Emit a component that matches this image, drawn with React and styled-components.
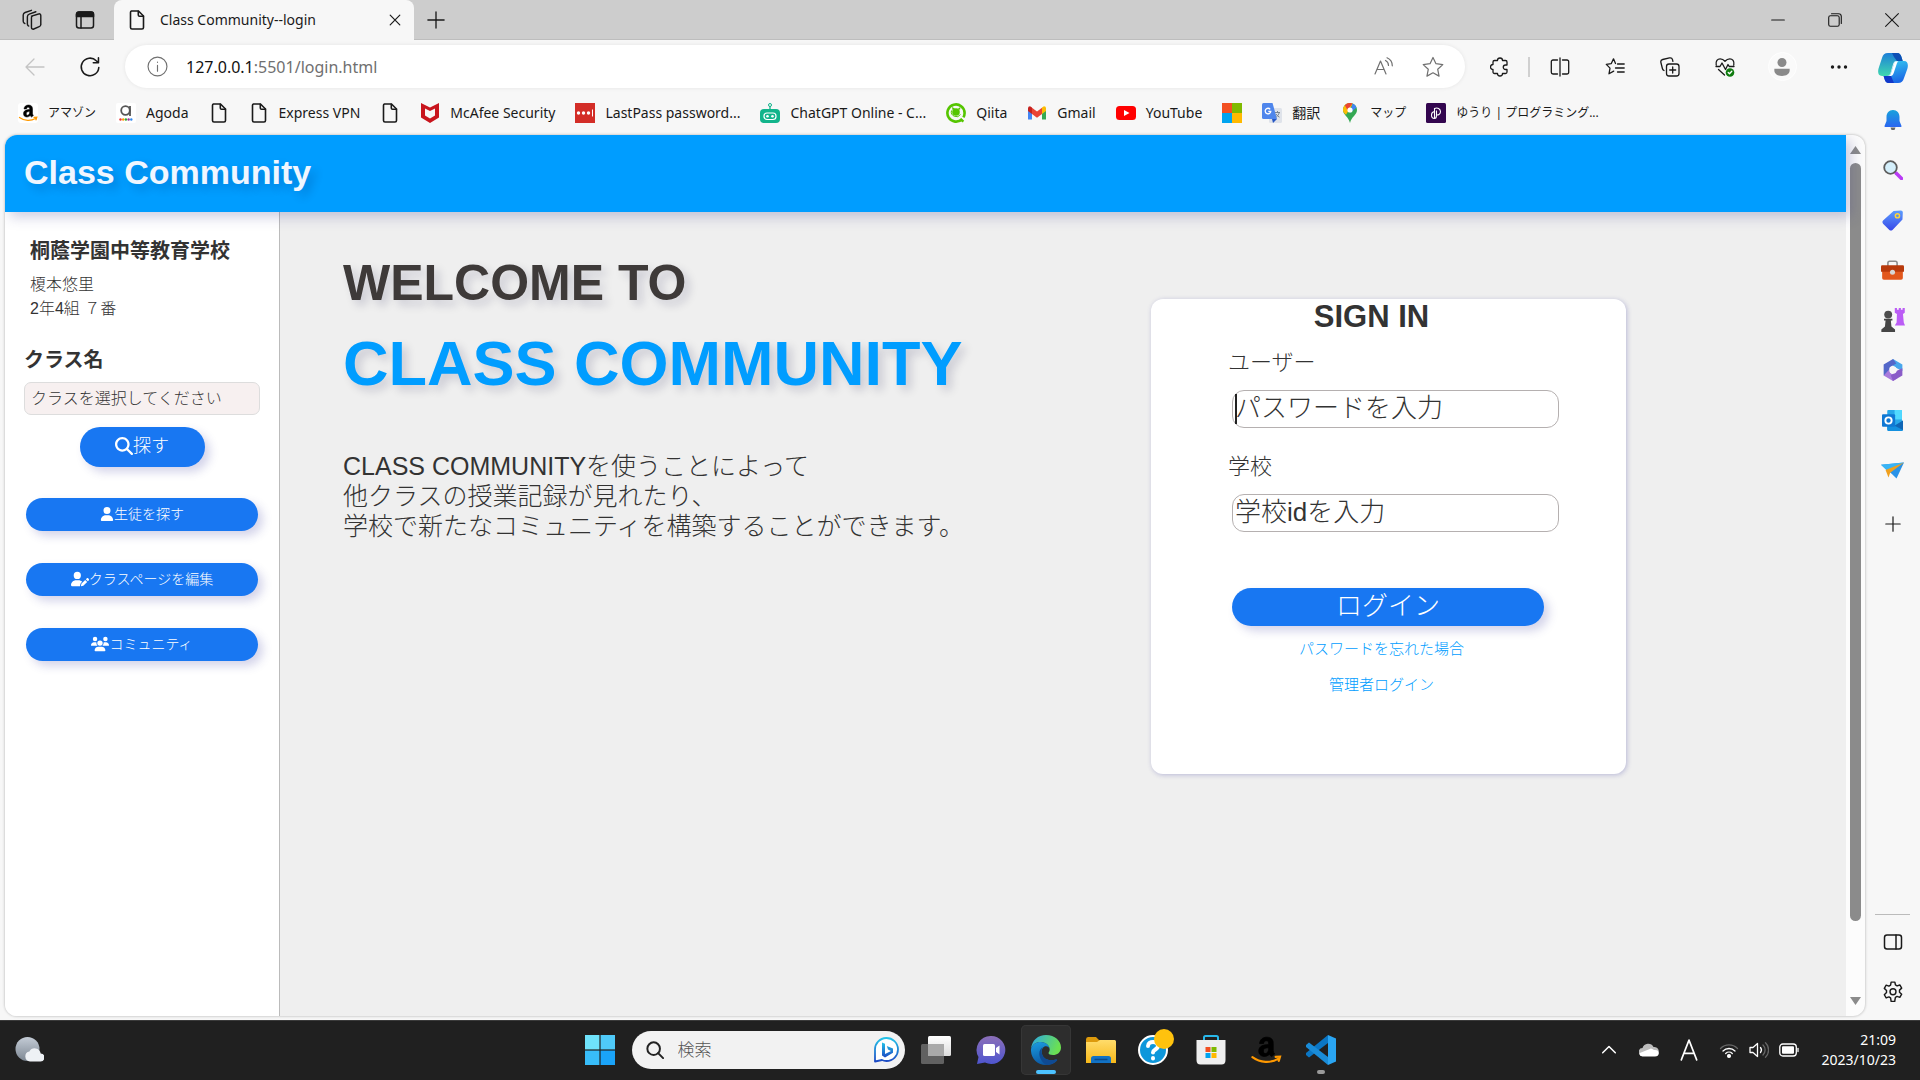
import React from "react";
import styled, { createGlobalStyle } from "styled-components";
import { FaMagnifyingGlass, FaUser, FaUserPen, FaUsers } from "react-icons/fa6";

const uiFont = `"Noto Sans", "Noto Sans CJK JP", sans-serif`;
const pageFont = `"Liberation Sans", Arial, "Noto Sans CJK JP", sans-serif`;
const sky = "#009dff";
const blue = "#1877f2";
const softShadow = "5px 5px 10px rgba(60, 60, 160, 0.22)";

const GlobalStyle = createGlobalStyle`
  *, *::before, *::after { box-sizing: border-box; }
  body { margin: 0; background: #f7f7f7; font-family: ${uiFont}; }
  button, input, select { font-family: inherit; font-weight: inherit; }
  h1, h2, p { margin: 0; }
  svg { display: block; flex: none; }
`;

/* ---------- Browser frame ---------- */

const Desktop = styled.div`
  min-height: 100vh;
  display: flex;
  flex-direction: column;
`;

const TabStrip = styled.header`
  height: 40px;
  display: flex;
  align-items: stretch;
  background: #cdcdcd;
  box-shadow: inset 0 -1px 0 #bdbdbd;
`;

const StripTools = styled.div`
  width: 114px;
  display: flex;
  align-items: center;
  gap: 32px;
  padding-left: 21px;
`;

const PlainButton = styled.button`
  display: grid;
  place-items: center;
  padding: 0;
  border: 0;
  background: none;
  color: #1a1a1a;
`;

const Tab = styled.div`
  width: 300px;
  display: flex;
  align-items: center;
  gap: 13px;
  padding: 0 13px;
  border-radius: 8px 8px 0 0;
  background: #f7f7f7;
  font-size: 14px;
  line-height: 20px;
  color: #1a1a1a;
  span { flex: 1; }
`;

const NewTab = styled(PlainButton)`
  width: 44px;
`;

const WindowButtons = styled.div`
  display: flex;
  margin-left: auto;
`;

const WindowButton = styled(PlainButton)`
  width: 57px;
`;

const Shell = styled.div`
  flex: 1;
  display: flex;
`;

const BrowserColumn = styled.div`
  flex: 1;
  min-width: 0;
  display: flex;
  flex-direction: column;
`;

const Toolbar = styled.nav`
  height: 53px;
  display: flex;
  align-items: center;
  padding-left: 7px;
`;

const ToolButton = styled(PlainButton)`
  width: ${(p) => p.$w || 55}px;
  height: 40px;
  color: ${(p) => (p.$faded ? "#c4c4c4" : "#1a1a1a")};
`;

const AddressBar = styled.div`
  flex: 1;
  height: 43px;
  display: flex;
  align-items: center;
  margin: 0 7px 0 8px;
  padding: 0 8px 0 22px;
  border-radius: 22px;
  background: #fff;
  box-shadow: 0 0 4px rgba(0, 0, 0, 0.08);
  color: #707070;
`;

const Url = styled.div`
  flex: 1;
  margin-left: 18px;
  font-size: 16px;
  line-height: 22px;
  b { font-weight: 400; color: #111; }
`;

const AddressButton = styled(PlainButton)`
  width: 49px;
  color: #707070;
`;

const Divider = styled.span`
  width: 2px;
  height: 20px;
  margin: 0 2px 0 1px;
  background: #d0d0d0;
`;

const Avatar = styled.span`
  width: 29px;
  height: 29px;
  display: grid;
  place-items: center;
  border-radius: 50%;
  background: #fafafa;
  border: 1px solid #fff;
`;

const Favorites = styled.nav`
  height: 42px;
  display: flex;
  align-items: center;
  gap: 20px;
  padding: 0 18px 2px;
`;

const Favorite = styled.a`
  display: flex;
  align-items: center;
  gap: 10px;
  color: #1a1a1a;
  font-size: ${(p) => (p.$kana ? 12 : 14)}px;
  line-height: 20px;
  text-decoration: none;
  white-space: nowrap;
`;

const EdgeSidebar = styled.aside`
  width: 55px;
  display: flex;
  flex-direction: column;
  align-items: center;
  padding-bottom: 3px;
`;

const SideButton = styled(PlainButton)`
  width: 40px;
  height: 50px;
`;

const CopilotButton = styled(SideButton)`
  height: 55px;
`;

const AddButton = styled(SideButton)`
  height: 58px;
`;

const SideRule = styled.hr`
  width: 35px;
  margin: auto 0 2px;
  border: 0;
  border-top: 1px solid #bbb;
`;

const Viewport = styled.div`
  flex: 1;
  display: flex;
  margin: 0 0 4px 5px;
  border-radius: 12px;
  overflow: hidden;
  background: #fcfcfc;
  box-shadow: 0 0 3px rgba(0, 0, 0, 0.3);
`;

const ScrollTrack = styled.div`
  width: 19px;
  display: flex;
  flex-direction: column;
  align-items: center;
  padding: 10px 0;
`;

const ScrollThumb = styled.div`
  width: 11px;
  flex: 1;
  margin: 9px 0 76px;
  border-radius: 6px;
  background: #8b8b8b;
`;

/* ---------- Web page ---------- */

const Page = styled.div`
  flex: 1;
  display: flex;
  flex-direction: column;
  background: #efefef;
  font-family: ${pageFont};
  font-weight: 300;
  color: #333;
`;

const PageHeader = styled.header`
  position: relative;
  z-index: 1;
  height: 77px;
  padding-left: 19px;
  background: ${sky};
  box-shadow: 5px 5px 12px rgba(60, 60, 140, 0.25);
`;

const Brand = styled.h1`
  font-size: 34px;
  line-height: 74px;
  color: #f0f6ff;
  text-shadow: 5px 5px 10px rgba(0, 0, 60, 0.2);
`;

const PageBody = styled.div`
  flex: 1;
  display: flex;
`;

const ClassPanel = styled.aside`
  width: 275px;
  padding: 25px 19px;
  border-right: 1px solid #bbb;
  background: #fff;
`;

const Profile = styled.div`
  padding-left: 6px;
  font-size: 16px;
  line-height: 24px;
`;

const School = styled.h2`
  margin-bottom: 8px;
  font-size: 20px;
  line-height: 28px;
`;

const ClassLabel = styled.label`
  display: block;
  margin: 25px 0 8px;
  font-size: 20px;
  font-weight: 700;
  line-height: 28px;
`;

const ClassSelect = styled.select`
  appearance: none;
  display: block;
  width: 100%;
  height: 33px;
  padding: 0 6px;
  border: 1px solid #ddd;
  border-radius: 7px;
  background: #f7f0f0;
  color: #333;
  font-size: 16px;
`;

const Pill = styled.button`
  display: flex;
  align-items: center;
  justify-content: center;
  width: 100%;
  height: 33px;
  padding: 0 0 2px;
  border: 0;
  border-radius: 20px;
  background: ${blue};
  box-shadow: ${softShadow};
  color: #fff;
  font-size: 14px;
  line-height: 20px;
`;

const SearchPill = styled(Pill)`
  width: 125px;
  height: 40px;
  margin: 12px auto 31px;
  padding-bottom: 3px;
  font-size: 18px;
  line-height: 24px;
`;

const PillList = styled.div`
  display: flex;
  flex-direction: column;
  gap: 32px;
  padding: 0 2px;
`;

const Main = styled.main`
  flex: 1;
  display: flex;
  align-items: flex-start;
  justify-content: space-between;
  padding: 0 220px 0 63px;
`;

const Hero = styled.section`
  padding-top: 41px;
`;

const Welcome = styled.p`
  font-size: 50px;
  font-weight: 700;
  line-height: 60px;
  color: #3e3a39;
  text-shadow: 5px 5px 10px rgba(0, 0, 60, 0.16);
`;

const HeroName = styled.h2`
  margin: 12px 0 50px;
  font-size: 63px;
  line-height: 76px;
  color: ${sky};
  text-shadow: 5px 5px 10px rgba(0, 0, 60, 0.16);
`;

const Lead = styled.p`
  font-size: 25px;
  line-height: 30px;
`;

const Card = styled.form`
  width: 475px;
  height: 475px;
  margin-top: 87px;
  padding: 0 67px 0 77px;
  border-radius: 12px;
  background: #fff;
  box-shadow: 1px 1px 5px rgba(60, 60, 160, 0.3);
`;

const CardTitle = styled.h2`
  padding-right: 44px;
  margin-bottom: 13px;
  font-size: 31px;
  line-height: 36px;
  text-align: center;
`;

const Field = styled.div`
  position: relative;
  margin-bottom: 24px;
  padding-left: 4px;
`;

const FieldLabel = styled.label`
  display: block;
  margin: 0 0 12px -4px;
  font-size: 22px;
  line-height: 30px;
`;

const TextInput = styled.input`
  display: block;
  width: 100%;
  height: 38px;
  padding: 0 2px 2px;
  border: 1px solid #b5b0b0;
  border-radius: 12px;
  background: #fff;
  color: #333;
  font-size: 26px;
  outline: 0;
  &::placeholder { color: #333; opacity: 1; }
`;

const Caret = styled.span`
  position: absolute;
  left: 7px;
  bottom: 4px;
  width: 2px;
  height: 30px;
  background: #222;
`;

const LoginPill = styled(Pill)`
  width: 312px;
  height: 38px;
  margin: 56px 0 11px 4px;
  padding-bottom: 3px;
  font-size: 26px;
  line-height: 32px;
`;

const CardLinks = styled.div`
  display: flex;
  flex-direction: column;
  align-items: center;
  gap: 12px;
  padding-right: 24px;
`;

const CardLink = styled.a`
  color: ${sky};
  font-size: 15px;
  line-height: 24px;
  text-decoration: none;
`;

/* ---------- Taskbar ---------- */

const Taskbar = styled.footer`
  height: 60px;
  display: grid;
  grid-template-columns: 1fr auto 1fr;
  align-items: center;
  background: #202020;
  box-shadow: inset 0 1px 0 #3a3a3a;
  color: #fff;
`;

const TaskButton = styled(PlainButton)`
  position: relative;
  width: 50px;
  height: 50px;
  border-radius: 5px;
  background: ${(p) => (p.$active ? "#2d2d2d" : "none")};
  box-shadow: ${(p) => (p.$active ? "inset 0 0 0 1px #363636" : "none")};
  &::after {
    content: "";
    position: absolute;
    bottom: 1px;
    width: ${(p) => (p.$active ? 20 : 8)}px;
    height: 4px;
    border-radius: 2px;
    background: ${(p) => (p.$active ? "#4cc2ff" : "#9a9a9a")};
    display: ${(p) => (p.$active || p.$running ? "block" : "none")};
  }
`;

const WeatherButton = styled(TaskButton)`
  margin-left: 4px;
`;

const Apps = styled.div`
  display: flex;
  align-items: center;
  gap: 5px;
`;

const SearchBox = styled.label`
  width: 273px;
  height: 38px;
  display: flex;
  align-items: center;
  gap: 14px;
  margin: 0 1px 0 2px;
  padding: 0 6px 0 14px;
  border-radius: 19px;
  background: #f2f2f2;
`;

const SearchInput = styled.input`
  flex: 1;
  min-width: 0;
  padding: 0;
  border: 0;
  background: none;
  outline: 0;
  font-size: 17px;
  font-weight: 300;
  line-height: 24px;
  &::placeholder { color: #555; opacity: 1; }
`;

const Tray = styled.div`
  display: flex;
  align-items: center;
  justify-content: flex-end;
  padding-right: 24px;
`;

const TrayItem = styled(PlainButton)`
  width: 40px;
  height: 40px;
  color: #fff;
`;

const TrayStatus = styled(PlainButton)`
  display: flex;
  align-items: center;
  margin-left: 5px;
  color: #fff;
  svg { margin: 0 5px; }
`;

const Clock = styled.time`
  width: 92px;
  font-size: 14px;
  line-height: 20px;
  text-align: right;
`;

/* ---------- Drawings ---------- */

const Line = ({ size = 20, w = 1.3, children }) => (
  <svg width={size} height={size} viewBox="0 0 20 20" fill="none" stroke="currentColor" strokeWidth={w} strokeLinecap="round" strokeLinejoin="round" aria-hidden="true">
    {children}
  </svg>
);

const Art = ({ size = 20, box = 20, children }) => (
  <svg width={size} height={size} viewBox={`0 0 ${box} ${box}`} aria-hidden="true">{children}</svg>
);

const Grad = ({ id, a, b, x2 = 0, y2 = 1 }) => (
  <linearGradient id={id} x1="0" y1="0" x2={x2} y2={y2}>
    <stop offset="0" stopColor={a} />
    <stop offset="1" stopColor={b} />
  </linearGradient>
);

const PageIcon = () => (
  <Line w={1.6}>
    <path d="M4.500 1h7l5 5v11.500a1.500 1.500 0 0 1-1.500 1.500h-10a1.500 1.500 0 0 1-1.500-1.500v-15A1.500 1.500 0 0 1 4.500 1z" />
    <path d="M11.300 1.200v3.800a1.300 1.300 0 0 0 1.300 1.300h3.800" />
  </Line>
);

const Workspaces = () => (
  <Line size={22}>
    <path d="M9.500 6.500l6.500-2a1.500 1.500 0 0 1 2 1.500v8a2 2 0 0 1-1.400 2l-5 2.200a1.500 1.500 0 0 1-2.100-1.400V8a1.500 1.500 0 0 1 1-1.500" />
    <path d="M7 15.500l-.5-.4a2 2 0 0 1-.7-1.500V7a2.500 2.500 0 0 1 1.700-2.300l6-2.200" />
    <path d="M3.500 13.200l-.8-.6A2 2 0 0 1 2 11V5.500a2.500 2.500 0 0 1 1.700-2.300L9.500 1.200" />
  </Line>
);

const VerticalTabs = () => (
  <Line w={1.5}>
    <rect x="1.500" y="2" width="17" height="16" rx="2.500" />
    <path d="M1.500 6.500V4.500A2.500 2.500 0 0 1 4 2h12a2.500 2.500 0 0 1 2.500 2.500v2z" fill="currentColor" />
    <path d="M6 6.500V18" />
  </Line>
);

const Plus = ({ size = 18 }) => <Line size={size} w={1.5}><path d="M10 1v18M1 10h18" /></Line>;
const Cross = ({ size = 12, w = 2 }) => <Line size={size} w={w}><path d="M2 2l16 16M18 2L2 18" /></Line>;
const Back = () => <Line><path d="M19 10H1M9 2L1 10l8 8" /></Line>;
const Reload = () => <Line size={22} w={1.4}><path d="M18 10.500a8 8 0 1 1-2.300-6.200l1.800 1.700M17.700 1.500v4.700H13" /></Line>;
const Info = () => <Line size={21} w={1.1}><circle cx="10" cy="10" r="9" /><path d="M10 9v5.500M10 5.800v.2" /></Line>;

const ReadAloud = () => (
  <Line w={1.2}><path d="M1 17L6.500 4 12 17M3 12.500h7M11.500 3.500c2 1 3 2.800 3 5M13 .8c3.500 1.500 5.300 4.500 5.300 8" /></Line>
);

const starPath = "M10 1.300l2.700 5.700 6.200.8-4.600 4.300 1.200 6.200-5.500-3-5.500 3 1.200-6.200L1.100 7.800 7.300 7z";
const Star = () => <Line size={22} w={1.1}><path d={starPath} /></Line>;

const Puzzle = () => (
  <Line><path d="M4.500 3.500h3a2.500 2.500 0 0 1 5 0h3a1.500 1.500 0 0 1 1.500 1.500v3h-1.500a2.200 2.200 0 0 0 0 4.500H17V15a1.500 1.500 0 0 1-1.500 1.500h-3a2.500 2.500 0 0 1-5 0h-3A1.500 1.500 0 0 1 3 15v-2.500a2.500 2.500 0 0 1 0-5V5a1.500 1.500 0 0 1 1.500-1.500z" /></Line>
);

const SplitScreen = () => (
  <Line><path d="M7.500 3H3a1.700 1.700 0 0 0-1.700 1.700v10.600A1.700 1.700 0 0 0 3 17h4.500M12.500 3H17a1.700 1.700 0 0 1 1.700 1.700v10.600A1.700 1.700 0 0 1 17 17h-4.500M10 1v18" /></Line>
);

const FavList = () => (
  <Line><path d="M10.500 6.500L8.500 1.800 6.300 6.600l-5 .8 3.700 3.700-1 5.700 4.700-2.700M12.500 7h6.700M10.500 11h8.700M12.500 15h6.700" /></Line>
);

const Collections = () => (
  <Line>
    <rect x="6.500" y="7" width="12.500" height="12" rx="2.500" />
    <path d="M12.700 10v6M9.700 13h6M4 13.500a3 3 0 0 1-1.600-2L.9 5.500a2.500 2.500 0 0 1 1.800-3L9.500.9a2.500 2.500 0 0 1 3 1.800l.4 1.600" />
  </Line>
);

const Health = () => (
  <Line>
    <path d="M1.200 8C.5 4 2.500 1.800 5.200 1.800c2 0 3.500 1 4.800 2.500 1.300-1.500 2.800-2.500 4.800-2.500 2.700 0 4.700 2.200 4 6.200M1 9.500h4L7 6l3.500 6.500 2.500-5 1.200 2H19M3.500 12.500L9.500 18" />
    <circle cx="15" cy="15.500" r="4.300" fill="#107c10" stroke="none" />
    <path d="M13.200 15.500l1.300 1.300 2.300-2.500" stroke="#fff" />
  </Line>
);

const Person = () => <Art size={18}><circle cx="10" cy="5" r="5" fill="#8a8a8a" /><path d="M1.500 12h17v2c0 4-4 6-8.500 6s-8.500-2-8.500-6z" fill="#8a8a8a" /></Art>;
const Dots = () => <Art><g fill="#1a1a1a"><circle cx="3.500" cy="10" r="1.700" /><circle cx="10" cy="10" r="1.700" /><circle cx="16.500" cy="10" r="1.700" /></g></Art>;

const Copilot = () => (
  <Art size={30} box={30}>
    <defs>
      <Grad id="cpA" a="#1d7fd8" b="#3fd8b0" />
      <Grad id="cpB" a="#35cdf0" b="#1c6ae6" x2={0.3} />
    </defs>
    <path d="M10 0h9c3 0 4 2 4.800 5l.9 3H19c-2.500 0-3.300 1-4 3.500L12.500 20c-.7 2-1.500 3-3.500 3H4c-4 0-4.500-4-3.300-8L4 5c1-3.300 2.500-5 6-5z" fill="url(#cpA)" />
    <path d="M14 0h5c3 0 4 2 4.800 5l.9 3H19l-3-4z" fill="#0d4fb5" />
    <path d="M20 30h-9c-3 0-4-2-4.800-5l-.6-2H9c2.500 0 3.300-1 4-3.500L16 11c.7-2 1.500-3 3.500-3H26c4 0 4.500 4 3.300 8L26 25c-1 3.300-2.500 5-6 5z" fill="url(#cpB)" />
    <path d="M16 30h-5c-3 0-4-2-4.800-5l-.6-2H9l4 0z" fill="#1238c9" />
    <path d="M18.500 8.200c-1.500.3-2 1.200-2.600 3L13 20c-.6 1.800-1.300 2.800-3 3h2.500c1.700 0 2.500-1 3.200-3l3-9c.4-1.300.7-2 1.800-2.800z" fill="#fff" />
  </Art>
);

const Bell = () => (
  <Art><defs><Grad id="bell" a="#18a2dd" b="#2b66f0" /></defs><path d="M7.500 17.500h5L11.500 20h-3z" fill="#666" /><path d="M10 0c4 0 6.500 3 6.500 7v4l2 5q.3 1-.8 1H2.300q-1.100 0-.8-1l2-5V7c0-4 2.500-7 6.500-7z" fill="url(#bell)" /></Art>
);
const SideSearch = () => (
  <Art><path d="M13 13l5.500 5.500" stroke="#b93cf5" strokeWidth="3.500" strokeLinecap="round" /><circle cx="7.500" cy="7.500" r="6.300" fill="#d4effb" stroke="#5d5d5d" strokeWidth="1.800" /></Art>
);
const TagArt = () => (
  <Art size={21}><defs><Grad id="tag" a="#5c9dff" b="#3848e8" /></defs><path d="M11 1l7-.5q2 0 1.800 2L19.500 9 10 19q-1.500 1.200-3 0L1 13q-1.200-1.500 0-3z" fill="url(#tag)" /><circle cx="14.700" cy="5.500" r="2" fill="#5b8fe8" stroke="#ffd43b" strokeWidth="1.400" /></Art>
);
const Toolbox = () => (
  <Art size={23}><path d="M6 6V3.500Q6 2 7.500 2h5Q14 2 14 3.500V6" fill="none" stroke="#8c8c8c" strokeWidth="1.400" /><rect x="1" y="6" width="18" height="12" rx="1.500" fill="#e2571c" /><path d="M0 6.500Q0 5.500 1 5.500h18q1 0 1 1V11H0z" fill="#b83a0c" /><circle cx="10" cy="11.500" r="2.200" fill="#d7d7d7" /></Art>
);
const Chess = () => (
  <Art size={24}><path d="M11.500 0h1.800v1.500h1.500V0h1.800v1.500H18V0h1.800v4L18.300 5l.7 7 1 2.500h-8.500l1.500-2.500.3-7-1.800-1z" fill="#bb5df5" /><circle cx="6" cy="5.500" r="3.300" fill="#4d4d4d" /><path d="M2.500 9h7v1.500H8.200l.5 5 3 2.500v2H.3v-2l3-2.500.5-5H2.500z" fill="#454545" /></Art>
);
const Office = () => (
  <Art size={22}><path d="M10 0l8.500 5v6l-6-3L8 4.500z" fill="#48a7ec" /><path d="M10 0L1.500 5v10L7 13V7.500L13 4z" fill="#5367c9" /><path d="M1.500 15L10 20l4-2.500-7-5.500V9z" fill="#a97bdc" /><path d="M10 20l8.500-5V8.500L13 11l-5 4z" fill="#8a5cc8" /><circle cx="10" cy="10" r="3.400" fill="#f7f7f7" /></Art>
);
const Outlook = () => (
  <Art size={21}><rect x="5" y="0" width="14" height="19" rx="1" fill="#28a8ea" /><path d="M12 0h7v9h-7z" fill="#50d9ff" /><path d="M5 11l7 4 8-5v9q0 1-1 1H6q-1 0-1-1z" fill="#1490df" /><path d="M20 10v9l-8-4z" fill="#1066b5" /><rect y="4" width="12.500" height="12" rx="1" fill="#0f78d4" /><circle cx="6.200" cy="10" r="3" fill="none" stroke="#fff" strokeWidth="1.800" /></Art>
);
const Plane = () => (
  <Art size={23}><path d="M0 5l20-2L13.500 17 9.500 13z" fill="#2a93e8" /><path d="M0 5l20-2L5 10z" fill="#39b4f5" /><path d="M4 9.500L20 3 8 12l-1.500 4z" fill="#f0a01e" /></Art>
);
const Panel = () => <Line w={1.500}><rect x="1.500" y="3" width="17" height="14" rx="2.500" /><path d="M13 3v14" /></Line>;
const Gear = () => (
  <Line size={22} w={1.3}>
    <path d="M8.300 1h3.400l.5 2.600 1.500.9 2.500-.9 1.700 2.900-2 1.800v1.900l2 1.800-1.700 2.900-2.500-.9-1.500.9-.5 2.600v1H8.300l-.5-3.100-1.500-.9-2.500.9-1.700-2.900 2-2v-1.900l-2-1.900 1.700-2.900 2.500.9 1.500-.9z" /><circle cx="10" cy="9.800" r="2.700" />
  </Line>
);

const AmazonA = ({ size = 20, dark }) => (
  <Art size={size}>
    {!dark && <rect width="20" height="20" rx="3" fill="#fff" />}
    <path d="M6 6c.2-2.500 2-4 4.500-4s4 1.300 4 3.800v4.500c0 1 .4 1.600.9 2.200l-1.900 1.600c-.7-.5-1-.9-1.300-1.500-2.300 2.400-6.700 1.700-6.700-1.900 0-3 2.500-4 6.200-4.100 0-1.500-.1-2.400-1.500-2.400-1 0-1.500.6-1.700 1.700zm5.700 2.600c-2 0-3.400.4-3.400 2.100 0 2.500 3.600 2 3.400-2.100z" fill="#000" stroke="#000" strokeWidth=".5" />
    <path d="M1.500 14.500c5 3.700 11.500 3.700 16 1M16 14.300l2.800-.2-.8 2.700" fill="none" stroke="#ff9900" strokeWidth="1.300" strokeLinecap="round" />
  </Art>
);
const Agoda = () => (
  <Art><rect width="20" height="20" rx="2" fill="#fff" /><circle cx="9.500" cy="7.500" r="4.300" fill="none" stroke="#555" strokeWidth="1.800" /><path d="M14 3v10" stroke="#555" strokeWidth="1.800" />{["#e33", "#f90", "#3a3", "#939", "#38e"].map((c, i) => <circle key={c} cx={4.500 + i * 2.700} cy="16.500" r="1.200" fill={c} />)}</Art>
);
const McAfee = () => <Art><path d="M1 0l9 4.500L19 0v14.500L10 20 1 14.500z" fill="#c8151d" /><path d="M5 5.500l5 2.500 5-2.500v7l-5 3-5-3z" fill="#f7f7f7" /></Art>;
const LastPass = () => <Art><rect width="20" height="20" fill="#d32d27" /><g fill="#fff"><circle cx="3.500" cy="10" r="1.700" /><circle cx="8.500" cy="10" r="1.700" /><circle cx="13.500" cy="10" r="1.700" /><rect x="17" y="6.500" width="1" height="7" /></g></Art>;
const Robot = () => <Art><path d="M10 3v4" stroke="#12b48b" strokeWidth="1.300" /><circle cx="10" cy="2" r="1.500" fill="none" stroke="#12b48b" /><rect x="0" y="6" width="20" height="14" rx="4" fill="#12b48b" /><rect x="4" y="10" width="12" height="6.500" rx="3" fill="none" stroke="#fff" strokeWidth="1.200" /><circle cx="7.500" cy="13.200" r="1.300" fill="#fff" /><circle cx="12.500" cy="13.200" r="1.300" fill="#fff" /></Art>;
const Qiita = () => <Art><path d="M16.200 16A8.600 8.600 0 1 1 18.600 10a8.600 8.600 0 0 1-1.200 4.400" fill="none" stroke="#55c500" strokeWidth="2.600" /><path d="M14.500 16.500l3 2" stroke="#55c500" strokeWidth="2.200" /><circle cx="10" cy="9" r="3.800" fill="#55c500" /><path d="M5.500 7.500a5 5 0 0 0 9 4" fill="none" stroke="#55c500" strokeWidth="1" /><path d="M6.500 7L6 4l3 1.500zM12 5.500L14.500 4l-.5 3z" fill="#55c500" /></Art>;
const Gmail = () => <Art><path d="M1 5v11.500h4V8z" fill="#4285f4" /><path d="M19 5v11.500h-4V8z" fill="#34a853" /><path d="M15 4.500L17 3.200q2 0 2 2V8l-4 3z" fill="#fbbc04" /><path d="M1 5.200q0-2 2-2L5 4.500V11L1 8z" fill="#c5221f" /><path d="M5 4.700L10 8.500l5-3.800V11l-5 3.700L5 11z" fill="#ea4335" /></Art>;
const YouTube = () => <Art><rect y="3" width="20" height="14" rx="3.500" fill="#f00" /><path d="M8 7l5.500 3L8 13z" fill="#fff" /></Art>;
const Squares = ({ size = 20, colors, gap = 0 }) => <Art size={size}>{colors.map((c, i) => <rect key={i} x={i % 2 ? 10 + gap : 0} y={i > 1 ? 10 + gap : 0} width={10 - gap} height={10 - gap} fill={c} />)}</Art>;
const msColors = ["#f25022", "#7fba00", "#00a4ef", "#ffb900"];
const Translate = () => <Art><rect x="7" y="5" width="13" height="15" rx="1.500" fill="#dfe3ea" /><path d="M1.500 0h9L15 16H1.500Q0 16 0 14.500v-13Q0 0 1.500 0z" fill="#4f86ec" /><path d="M11 20l4-4h-5z" fill="#2757c4" /><path d="M8.200 6.300A2.800 2.800 0 1 0 8.800 8.300H6.300" fill="none" stroke="#fff" strokeWidth="1.300" /><path d="M13 9.500h5M15.500 8v1.500M17.300 9.500c-.5 2-1.800 3.500-3 4.500M14 11c.8 1.500 2 2.500 3.500 3.200" fill="none" stroke="#7b8794" /></Art>;
const MapPin = () => <Art><path d="M10 0C14 0 17 3 17 7c0 5-5.500 6.500-7 13C8.500 13.500 3 12 3 7c0-4 3-7 7-7z" fill="#34a853" /><path d="M3 7c0-4 3-7 7-7L13 .7 6 11.700C4.300 10.500 3 9 3 7z" fill="#fbbc04" /><path d="M4.800 2.300A7 7 0 0 1 12.500.5L7.500 7z" fill="#ea4335" /><path d="M12.500.5A7 7 0 0 1 16.500 4.500L10 10z" fill="#4285f4" /><circle cx="10" cy="7" r="2.600" fill="#fff" /></Art>;
const ProgLogo = () => <Art><rect width="20" height="20" rx="1.500" fill="#33064f" /><path d="M8.500 15.500V5.500c3-1.500 6 .3 6 3.200 0 2.500-2.500 3.800-4.500 3M8.500 8.500c-2 .3-3 1.700-3 3.500 0 2.500 1.500 3.500 3 3.500s2-1 2-3V7.500" fill="none" stroke="#fff" strokeWidth="1.100" /></Art>;

const Weather = () => <Art size={30} box={30}><defs><Grad id="moon" a="#c4ccd6" b="#7d8793" /></defs><circle cx="13.500" cy="14" r="12" fill="url(#moon)" /><path d="M16 26.500a5 5 0 0 1-.6-9.900 6 6 0 0 1 11.300 1.900 4 4 0 0 1-.7 8z" fill="#eef1f5" /></Art>;
const BingIcon = () => <Art size={26} box={26}><defs><Grad id="bing" a="#25c4e8" b="#1c49c4" /></defs><path d="M2 24.500V13A11.500 11.500 0 1 1 13.500 24q-2.500 0-4.500-1z" fill="#fff" stroke="url(#bing)" strokeWidth="1.800" strokeLinejoin="round" /><path d="M9 5.500l3 1.200V17l6-3-3-1.500-1.200-3.500 6.200 2.500v4.300L12 20.500l-3-2z" fill="url(#bing)" /></Art>;
const TaskView = () => <Art size={30} box={30}><defs><Grad id="tv" a="#fff" b="#dcdcdc" /></defs><rect x="7" y="1" width="23" height="20" rx="1.500" fill="url(#tv)" /><rect x="0" y="9" width="23" height="20" rx="1.500" fill="#6d6d6d" fillOpacity=".85" /><rect x="7" y="9" width="16" height="12" fill="#a9a9a9" /></Art>;
const Chat = () => <Art size={30} box={30}><defs><Grad id="chat" a="#8c6fb8" b="#4e55cf" /></defs><path d="M15 1a14 14 0 1 1-6 26.500L1 29l1.500-7A14 14 0 0 1 15 1z" fill="url(#chat)" /><rect x="7" y="9" width="12" height="12" rx="1.500" fill="#fff" /><path d="M20 13l3.500-2.500v9L20 17z" fill="#fff" /></Art>;
const EdgeLogo = () => (
  <Art size={30} box={30}>
    <defs><Grad id="eA" a="#2aa8e8" b="#6be052" x2={1} y2={0.300} /><Grad id="eB" a="#1b9de2" b="#0c59a4" x2={0.300} /></defs>
    <path d="M0 14C1 5 7 0 15 0c9 0 15 6 15 12.500 0 5-4 7.500-8 7.500-3 0-4.500-1-4.500-2 0-.8 1.200-1.300 1.200-3.500C18.700 10 14 7 9.500 7 5 7 1.500 9.500 0 14z" fill="url(#eA)" />
    <path d="M0 14C1.500 9.500 5 7 9.500 7c5 0 9.200 3 9.200 7.500 0-2-1.700-3.300-3.700-3.300-3.500 0-5 4-4 7.800 1.500 5.500 8 7.500 14 5.500.8-.3 1.500.2 1 1C23.500 28.500 19 30 15 30 6 30-.5 23 0 14z" fill="url(#eB)" />
    <path d="M12 11.800c-3 2.200-4.500 5.500-3.300 9.700 1 3.500 3 6.500 6.300 8.500 4 .2 8.500-1.500 11-4.500.5-.8-.2-1.300-1-1-6 2-12.500 0-14-5.500-.8-3-.2-6 1-7.200z" fill="#0f4a93" />
  </Art>
);
const Folder = () => <Art size={30} box={30}><defs><Grad id="fold" a="#ffdc6b" b="#f7b819" /></defs><path d="M0 4.500Q0 2 2 2h8l3 3h16v6H0z" fill="#dd9a0c" /><path d="M0 7h11l3-2h14.500Q30 5 30 6.500V28H0z" fill="url(#fold)" /><path d="M5 28v-4.500Q5 21 7.500 21h15q2.500 0 2.500 2.500V28z" fill="#1272c4" /><path d="M8.500 24.500h13" stroke="#0b4a8a" strokeWidth="1.500" /></Art>;
const Help = () => <svg width="36" height="42" viewBox="0 0 36 42" aria-hidden="true"><circle cx="15" cy="21" r="14" fill="#0e97db" stroke="#fff" strokeWidth="2" /><path d="M10 17c0-5.500 10-5.500 10 0 0 3.500-5 3.500-5 6.500M15 29v.5" fill="none" stroke="#fff" strokeWidth="4" strokeLinecap="round" /><circle cx="26" cy="10" r="10" fill="#ffc20e" /></svg>;
const Store = () => <Art size={30} box={30}><path d="M8 6V2.500Q8 1 9.500 1h11Q22 1 22 2.500V6" fill="none" stroke="#28b8ea" strokeWidth="2" /><path d="M.5 5h29v20q0 4.500-4 4.500h-21q-4 0-4-4.500z" fill="#efefef" /><g>{msColors.map((c, i) => <rect key={c} x={i % 2 ? 15.500 : 9.500} y={i > 1 ? 18 : 12} width="5" height="5" fill={c} />)}</g></Art>;
const VSCode = () => <Art size={30} box={30}><path d="M22 0L0 18l0 2 3 2.500L22 8z" fill="#0b76c4" /><path d="M22 30L0 12v-2l3-2.500L22 22z" fill="#1a8cd8" /><path d="M22 0l8 3.500v23L22 30z" fill="#2aa5f2" /></Art>;

const TrayCloud = () => <svg width="20" height="14" viewBox="0 0 20 14" aria-hidden="true"><path d="M4 13a4 4 0 0 1-.5-8A6 6 0 0 1 14.500 4 4.500 4.500 0 0 1 16 13z" fill="#bdbdbd" /><path d="M3.500 13.500Q0 13 .8 10L12 5.500q2 .5 3 1.500 4.500-.5 4.800 3.300Q19.500 13.500 16 13.500z" fill="#fff" /></svg>;
const Wifi = () => <Line><path d="M1.500 8.500a12 12 0 0 1 17 0" stroke="#666" /><path d="M4 11a8.500 8.500 0 0 1 12 0M6.700 13.500a4.800 4.800 0 0 1 6.600 0" /><circle cx="10" cy="16" r="1.400" fill="currentColor" /></Line>;
const Speaker = () => <Line><path d="M1 7.500h3L8.500 3.500v13L4 12.500H1zM11.500 7.500a4 4 0 0 1 0 5" /><path d="M14 5a7 7 0 0 1 0 10M16.500 2.800a10 10 0 0 1 0 14.400" stroke="#666" /></Line>;
const Battery = () => <Line><rect x=".8" y="4" width="16.500" height="12" rx="3" /><rect x="3" y="6.300" width="12" height="7.500" rx="1" fill="currentColor" stroke="none" /><path d="M19 8.500v3" /></Line>;

/* ---------- Data ---------- */

const favorites = [
  { label: "アマゾン", icon: <AmazonA />, kana: true },
  { label: "Agoda", icon: <Agoda /> },
  { name: "ページ 1", icon: <PageIcon /> },
  { label: "Express VPN", icon: <PageIcon /> },
  { name: "ページ 2", icon: <PageIcon /> },
  { label: "McAfee Security", icon: <McAfee /> },
  { label: "LastPass password...", icon: <LastPass /> },
  { label: "ChatGPT Online - C...", icon: <Robot /> },
  { label: "Qiita", icon: <Qiita /> },
  { label: "Gmail", icon: <Gmail /> },
  { label: "YouTube", icon: <YouTube /> },
  { name: "Microsoft", icon: <Squares colors={msColors} /> },
  { label: "翻訳", icon: <Translate /> },
  { label: "マップ", icon: <MapPin />, kana: true },
  { label: "ゆうり | プログラミング...", icon: <ProgLogo />, kana: true },
];

const tools = [
  ["画面を分割", <SplitScreen />],
  ["お気に入り", <FavList />],
  ["コレクション", <Collections />],
  ["ブラウザーのエッセンシャル", <Health />],
  ["プロファイル", <Avatar><Person /></Avatar>, 60],
  ["設定など", <Dots />, 53],
];

const sideTools = [
  ["通知", <Bell />],
  ["検索", <SideSearch />],
  ["ショッピング", <TagArt />],
  ["ツール", <Toolbox />],
  ["ゲーム", <Chess />],
  ["Microsoft 365", <Office />],
  ["Outlook", <Outlook />],
  ["Drop", <Plane />],
];

const apps = [
  { name: "タスク ビュー", icon: <TaskView /> },
  { name: "チャット", icon: <Chat /> },
  { name: "Microsoft Edge", icon: <EdgeLogo />, active: true },
  { name: "エクスプローラー", icon: <Folder /> },
  { name: "ヘルプ", icon: <Help /> },
  { name: "Microsoft Store", icon: <Store /> },
  { name: "Amazon", icon: <AmazonA size={32} dark /> },
  { name: "Visual Studio Code", icon: <VSCode />, running: true },
];

/* ---------- Sections ---------- */

const LoginPage = () => (
  <Page>
    <PageHeader><Brand>Class Community</Brand></PageHeader>
    <PageBody>
      <ClassPanel>
        <Profile>
          <School>桐蔭学園中等教育学校</School>
          <p>榎本悠里</p>
          <p>2年4組 ７番</p>
        </Profile>
        <ClassLabel htmlFor="class-name">クラス名</ClassLabel>
        <ClassSelect id="class-name"><option>クラスを選択してください</option></ClassSelect>
        <SearchPill type="button"><FaMagnifyingGlass />探す</SearchPill>
        <PillList>
          <Pill type="button"><FaUser />生徒を探す</Pill>
          <Pill type="button"><FaUserPen size={18} />クラスページを編集</Pill>
          <Pill type="button"><FaUsers size={18} />コミュニティ</Pill>
        </PillList>
      </ClassPanel>
      <Main>
        <Hero>
          <Welcome>WELCOME TO</Welcome>
          <HeroName>CLASS COMMUNITY</HeroName>
          <Lead>
            CLASS COMMUNITYを使うことによって<br />
            他クラスの授業記録が見れたり、<br />
            学校で新たなコミュニティを構築することができます。
          </Lead>
        </Hero>
        <Card>
          <CardTitle>SIGN IN</CardTitle>
          <Field>
            <FieldLabel htmlFor="user">ユーザー</FieldLabel>
            <TextInput id="user" placeholder="パスワードを入力" />
            <Caret />
          </Field>
          <Field>
            <FieldLabel htmlFor="school">学校</FieldLabel>
            <TextInput id="school" placeholder="学校idを入力" />
          </Field>
          <LoginPill type="button">ログイン</LoginPill>
          <CardLinks>
            <CardLink href="#forgot">パスワードを忘れた場合</CardLink>
            <CardLink href="#admin">管理者ログイン</CardLink>
          </CardLinks>
        </Card>
      </Main>
    </PageBody>
  </Page>
);

export default function App() {
  return (
    <Desktop>
      <GlobalStyle />
      <TabStrip>
        <StripTools>
          <PlainButton aria-label="ワークスペース"><Workspaces /></PlainButton>
          <PlainButton aria-label="タブ操作メニュー"><VerticalTabs /></PlainButton>
        </StripTools>
        <Tab>
          <PageIcon />
          <span>Class Community--login</span>
          <PlainButton aria-label="タブを閉じる"><Cross /></PlainButton>
        </Tab>
        <NewTab aria-label="新しいタブ"><Plus /></NewTab>
        <WindowButtons>
          <WindowButton aria-label="最小化"><Line size={14} w={1.6}><path d="M1 10h18" /></Line></WindowButton>
          <WindowButton aria-label="元に戻す"><Line size={14} w={1.6}><rect x="1" y="4" width="15" height="15" rx="2.500" /><path d="M5 1h10a4 4 0 0 1 4 4v10" /></Line></WindowButton>
          <WindowButton aria-label="閉じる"><Cross size={16} w={1.4} /></WindowButton>
        </WindowButtons>
      </TabStrip>
      <Shell>
        <BrowserColumn>
          <Toolbar>
            <ToolButton aria-label="戻る" $faded><Back /></ToolButton>
            <ToolButton aria-label="更新"><Reload /></ToolButton>
            <AddressBar>
              <Info />
              <Url><b>127.0.0.1</b>:5501/login.html</Url>
              <AddressButton aria-label="音声で読み上げる"><ReadAloud /></AddressButton>
              <AddressButton aria-label="お気に入りに追加"><Star /></AddressButton>
            </AddressBar>
            <ToolButton aria-label="拡張機能"><Puzzle /></ToolButton>
            <Divider />
            {tools.map(([name, icon, w]) => <ToolButton key={name} aria-label={name} $w={w}>{icon}</ToolButton>)}
          </Toolbar>
          <Favorites>
            {favorites.map((f) => (
              <Favorite key={f.label || f.name} href="#" aria-label={f.label || f.name} $kana={f.kana}>{f.icon}{f.label}</Favorite>
            ))}
          </Favorites>
          <Viewport>
            <LoginPage />
            <ScrollTrack>
              <svg width="11" height="9" viewBox="0 0 11 9" aria-hidden="true"><path d="M5.500 1L11 9H0z" fill="#8b8b8b" /></svg>
              <ScrollThumb />
              <svg width="11" height="9" viewBox="0 0 11 9" aria-hidden="true"><path d="M5.500 8L11 0H0z" fill="#8b8b8b" /></svg>
            </ScrollTrack>
          </Viewport>
        </BrowserColumn>
        <EdgeSidebar>
          <CopilotButton aria-label="Copilot"><Copilot /></CopilotButton>
          {sideTools.map(([name, icon]) => <SideButton key={name} aria-label={name}>{icon}</SideButton>)}
          <AddButton aria-label="カスタマイズ"><Plus size={16} /></AddButton>
          <SideRule />
          <SideButton aria-label="サイドバーを隠す"><Panel /></SideButton>
          <SideButton aria-label="設定"><Gear /></SideButton>
        </EdgeSidebar>
      </Shell>
      <Taskbar>
        <WeatherButton aria-label="天気"><Weather /></WeatherButton>
        <Apps>
          <TaskButton aria-label="スタート"><Squares size={30} gap={0.400} colors={["#6fe3fb", "#4fcaf9", "#38bdf9", "#1aa3f8"]} /></TaskButton>
          <SearchBox>
            <Line size={18} w={2.200}><g stroke="#222"><circle cx="8.500" cy="8.500" r="7" /><path d="M13.500 13.500L19 19" /></g></Line>
            <SearchInput placeholder="検索" aria-label="検索" />
            <BingIcon />
          </SearchBox>
          {apps.map((a) => <TaskButton key={a.name} aria-label={a.name} $active={a.active} $running={a.running}>{a.icon}</TaskButton>)}
        </Apps>
        <Tray>
          <TrayItem aria-label="隠れているインジケーター"><Line size={14} w={2.200}><path d="M1 14l9-9 9 9" /></Line></TrayItem>
          <TrayItem aria-label="OneDrive"><TrayCloud /></TrayItem>
          <TrayItem aria-label="入力モード"><Line size={22} w={1.500}><path d="M3 19L10 1l7 18M5.500 13h9" /></Line></TrayItem>
          <TrayStatus aria-label="ネットワーク、音量、バッテリー"><Wifi /><Speaker /><Battery /></TrayStatus>
          <Clock>21:09<br />2023/10/23</Clock>
        </Tray>
      </Taskbar>
    </Desktop>
  );
}
